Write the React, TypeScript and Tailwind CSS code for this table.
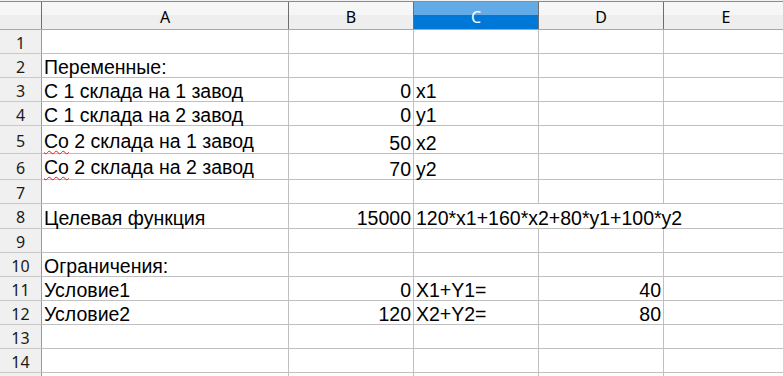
import React from 'react';

type Row = {
  n: number;
  h: string;
  a?: React.ReactNode;
  b?: string;
  c?: string;
  d?: string;
  spill?: boolean;
  squiggle?: boolean;
};

// "Со" gets the spell-checker squiggle
const Squiggle = ({ children }: { children: React.ReactNode }) => (
  <span className="underline decoration-wavy decoration-[#e0201e] decoration-1 underline-offset-[2px] [text-decoration-skip-ink:none]">
    {children}
  </span>
);

const ROWS: Row[] = [
  { n: 1, h: 'h-[24px]' },
  { n: 2, h: 'h-[24px]', a: 'Переменные:' },
  { n: 3, h: 'h-[24px]', a: 'С 1 склада на 1 завод', b: '0', c: 'x1' },
  { n: 4, h: 'h-[24px]', a: 'С 1 склада на 2 завод', b: '0', c: 'y1' },
  { n: 5, h: 'h-[28px]', a: <span><Squiggle>Со</Squiggle> 2 склада на 1 завод</span>, b: '50', c: 'x2', squiggle: true },
  { n: 6, h: 'h-[26px]', a: <span><Squiggle>Со</Squiggle> 2 склада на 2 завод</span>, b: '70', c: 'y2', squiggle: true },
  { n: 7, h: 'h-[24px]' },
  { n: 8, h: 'h-[25px]', a: 'Целевая функция', b: '15000', c: '120*x1+160*x2+80*y1+100*y2', spill: true },
  { n: 9, h: 'h-[24px]' },
  { n: 10, h: 'h-[24px]', a: 'Ограничения:' },
  { n: 11, h: 'h-[24px]', a: 'Условие1', b: '0', c: 'X1+Y1=', d: '40' },
  { n: 12, h: 'h-[24px]', a: 'Условие2', b: '120', c: 'X2+Y2=', d: '80' },
  { n: 13, h: 'h-[24px]' },
  { n: 14, h: 'h-[24px]' },
  { n: 15, h: 'h-[24px]' },
];

const COLS = ['A', 'B', 'C', 'D', 'E'];
const GRID = 'grid grid-cols-[42px_247px_125px_125px_125px_125px] grid-rows-[minmax(0,1fr)] overflow-visible';
const cell = 'flex items-end px-[2px] leading-[18px] whitespace-nowrap border-b border-[#c0c0c0]';

export default function App() {
  return (
    <div className="w-[783px] h-[376px] overflow-hidden bg-white text-black">
      <div className="h-[1px] bg-[#f0f0f0]" />

      {/* Column headers */}
      <div className={`${GRID} h-[29px] border-t border-b border-t-[#8c8c8c] border-b-[#a8a8a8] font-['Noto_Sans',sans-serif] text-[16px] leading-[18px]`}>
        <div className="border-r border-[#6e6e6e] bg-[linear-gradient(#f6f6f6_0_50%,#eeeeee_50%)]" />
        {COLS.map(col => (
          <div
            key={col}
            className={`flex items-center justify-center pt-[2px] border-r border-[#6e6e6e] ${
              col === 'C'
                ? 'bg-[linear-gradient(#62abe6_0_50%,#0078d7_50%)] text-white'
                : 'bg-[linear-gradient(#f6f6f6_0_50%,#eeeeee_50%)]'
            }`}
          >
            {col}
          </div>
        ))}
      </div>

      {/* Sheet body */}
      {ROWS.map(row => (
        <div key={row.n} className={`${GRID} ${row.h} font-['Liberation_Sans',Arial,sans-serif] text-[19.5px]`}>
          <div className="flex items-center justify-center pt-[2px] border-r border-b border-r-[#9a9a9a] border-b-[#c8c8c8] bg-[#f0f0f0] font-['Noto_Sans',sans-serif] text-[16px] leading-[18px] text-[#1a1a1a]">
            {row.n < 15 ? row.n : null}
          </div>
          <div className={`${cell} border-r ${row.squiggle ? 'pb-[3px]' : 'pb-[1px]'}`}>{row.a}</div>
          <div className={`${cell} pb-[1px] border-r justify-end`}>{row.b}</div>
          <div className={`${cell} pb-[1px] relative z-10 overflow-visible ${row.spill ? '' : 'border-r'}`}>{row.c}</div>
          <div className={`${cell} pb-[1px] justify-end ${row.spill ? '' : 'border-r'}`}>{row.d}</div>
          <div className={`${cell} border-r`} />
        </div>
      ))}
    </div>
  );
}
